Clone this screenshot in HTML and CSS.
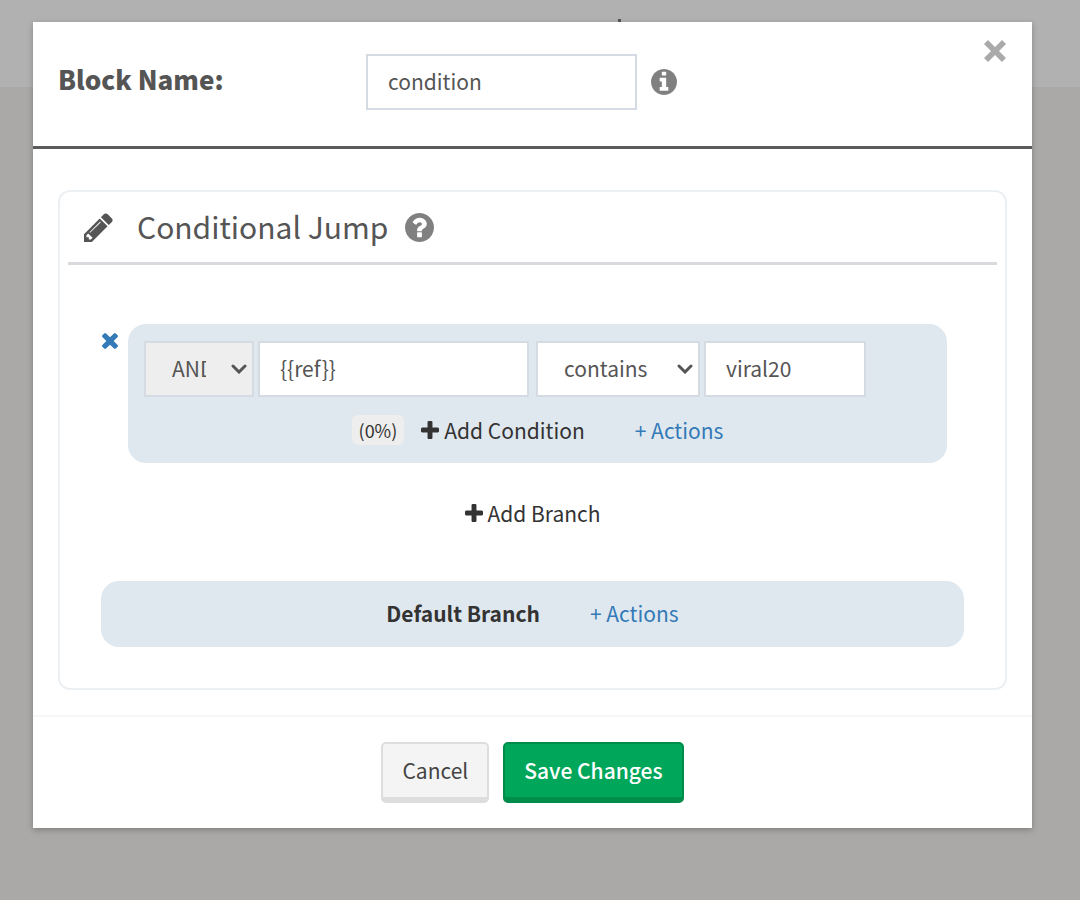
FILE: index.html
```
<!DOCTYPE html>
<html lang="en">
<head>
    <meta charset="UTF-8">
    <meta name="viewport" content="width=device-width, initial-scale=1.0">
    <title>Conditional Jump</title>
    <link rel="stylesheet" href="styles.css">
</head>
<body>
    <div class="topbar"><span class="topbar-mark"></span></div>

    <div class="overlay">
      <div class="modal" role="dialog" aria-label="Edit block">
        <div class="modal-header">
          <div class="block-name">
            <label for="block-name">Block Name:</label>
            <input type="text" id="block-name" class="field" value="condition">
            <svg class="icon info" viewBox="128 128 1536 1536"><path d="M1152 1376v-160q0-14-9-23t-23-9h-96v-512q0-14-9-23t-23-9h-320q-14 0-23 9t-9 23v160q0 14 9 23t23 9h96v320h-96q-14 0-23 9t-9 23v160q0 14 9 23t23 9h448q14 0 23-9t9-23zm-128-896v-160q0-14-9-23t-23-9h-192q-14 0-23 9t-9 23v160q0 14 9 23t23 9h192q14 0 23-9t9-23zm640 416q0 209-103 385.5t-279.5 279.5-385.5 103-385.5-103-279.5-279.5-103-385.5 103-385.5 279.5-279.5 385.5-103 385.5 103 279.5 279.5 103 385.5z"/></svg>
          </div>
          <button type="button" class="close" aria-label="Close">
            <svg class="icon" viewBox="0 0 22 22"><path d="M4 0L11 7L18 0L22 4L15 11L22 18L18 22L11 15L4 22L0 18L7 11L0 4Z"/></svg>
          </button>
        </div>

        <div class="modal-body">
          <div class="panel">
            <div class="panel-title">
              <svg class="icon pencil" viewBox="128 128 1536 1536"><path d="M491 1536l91-91-235-235-91 91v107h128v128h107zm523-928q0-22-22-22-10 0-17 7l-542 542q-7 7-7 17 0 22 22 22 10 0 17-7l542-542q7-7 7-17zm-54-192l416 416-832 832h-416v-416zm683 96q0 53-37 90l-166 166-416-416 166-165q36-38 90-38 53 0 91 38l235 234q37 39 37 91z"/></svg>
              <h3>Conditional Jump</h3>
              <svg class="icon help" viewBox="128 128 1536 1536"><path d="M1024 1376v-192q0-14-9-23t-23-9h-192q-14 0-23 9t-9 23v192q0 14 9 23t23 9h192q14 0 23-9t9-23zm256-672q0-88-55.5-163t-138.5-116-170-41q-243 0-371 213-15 24 8 42l132 100q7 6 19 6 16 0 25-12 53-68 86-92 34-24 86-24 48 0 85.5 26t37.5 59q0 38-20 61t-68 45q-63 28-115.5 86.5t-52.5 125.5v36q0 14 9 23t23 9h192q14 0 23-9t9-23q0-19 21.5-49.5t54.5-49.5q32-18 49-28.5t46-35 44.5-48 28-60.5 12.5-81zm384 192q0 209-103 385.5t-279.5 279.5-385.5 103-385.5-103-279.5-279.5-103-385.5 103-385.5 279.5-279.5 385.5-103 385.5 103 279.5 279.5 103 385.5z"/></svg>
            </div>

            <div class="branch-row">
              <button type="button" class="remove" aria-label="Remove branch">
                <svg class="icon" viewBox="302 366 1188 1188"><path d="M1490 1322q0 40-28 68l-136 136q-28 28-68 28t-68-28l-294-294-294 294q-28 28-68 28t-68-28l-136-136q-28-28-28-68t28-68l294-294-294-294q-28-28-28-68t28-68l136-136q28-28 68-28t68 28l294 294 294-294q28-28 68-28t68 28l136 136q28 28 28 68t-28 68l-294 294 294 294q28 28 28 68z"/></svg>
              </button>
              <div class="branch">
                <div class="condition">
                  <select class="field operator" aria-label="Operator">
                    <option>AND</option>
                    <option>OR</option>
                  </select>
                  <input type="text" class="field" aria-label="Variable" value="{{ref}}">
                  <select class="field compare" aria-label="Comparison">
                    <option>contains</option>
                    <option>equals</option>
                  </select>
                  <input type="text" class="field value" aria-label="Value" value="viral20">
                </div>
                <div class="branch-actions">
                  <span class="percent">(0%)</span>
                  <button type="button" class="add">
                    <svg class="icon" viewBox="192 128 1408 1408"><path d="M1600 736v192q0 40-28 68t-68 28h-416v416q0 40-28 68t-68 28h-192q-40 0-68-28t-28-68v-416h-416q-40 0-68-28t-28-68v-192q0-40 28-68t68-28h416v-416q0-40 28-68t68-28h192q40 0 68 28t28 68v416h416q40 0 68 28t28 68z"/></svg>
                    Add Condition
                  </button>
                  <a href="#" class="actions">+ Actions</a>
                </div>
              </div>
            </div>

            <button type="button" class="add add-branch">
              <svg class="icon" viewBox="192 128 1408 1408"><path d="M1600 736v192q0 40-28 68t-68 28h-416v416q0 40-28 68t-68 28h-192q-40 0-68-28t-28-68v-416h-416q-40 0-68-28t-28-68v-192q0-40 28-68t68-28h416v-416q0-40 28-68t68-28h192q40 0 68 28t28 68v416h416q40 0 68 28t28 68z"/></svg>
              Add Branch
            </button>

            <div class="default-branch">
              <strong>Default Branch</strong>
              <a href="#" class="actions">+ Actions</a>
            </div>
          </div>
        </div>

        <div class="modal-footer">
          <button type="button" class="btn">Cancel</button>
          <button type="button" class="btn save">Save Changes</button>
        </div>
      </div>
    </div>
</body>
</html>
```

FILE: styles.css
```
*{
    margin: 0;
    padding: 0;
    box-sizing: border-box;
}
body{
    min-height: 100vh;
    background: #aaa9a7;
    color: #333;
    font-family: "Noto Sans CJK SC", "Open Sans", sans-serif;
    font-size: 21px;
    line-height: 30px;
}
button, input, select{
    font: inherit;
    color: inherit;
}
button{
    border: none;
    background: none;
    cursor: pointer;
}
a{
    color: #337ab7;
    text-decoration: none;
}
.icon{
    display: block;
    flex: none;
    fill: currentColor;
}

/* page behind the dialog */
.topbar{
    display: flex;
    justify-content: center;
    height: 87px;
    padding: 19px 0 0 159px;
    background: #b1b1b1;
}
.topbar-mark{
    width: 3px;
    height: 16px;
    background: #555;
}
.overlay{
    position: absolute;
    inset: 0;
    padding: 22px 48px 22px 33px;
}
.modal{
    background: #fff;
    box-shadow: 0 2px 6px rgba(0, 0, 0, 0.25);
}

/* header */
.modal-header{
    display: flex;
    justify-content: space-between;
    align-items: flex-start;
    padding: 18px 26px 36px 25px;
    border-bottom: 3px solid #5a5c5b;
}
.block-name{
    display: flex;
    align-items: center;
    padding-top: 14px;
}
.block-name label{
    width: 308px;
    padding-bottom: 6px;
    color: #555;
    font-size: 26px;
    font-weight: 900;
}
.field{
    width: 271px;
    height: 56px;
    padding: 0 20px 2px;
    border: 2px solid #d5dbe3;
    background: #fff;
    color: #555;
    outline: none;
}
.info{
    width: 26px;
    height: 26px;
    margin-left: 14px;
    color: #808080;
}
.close{
    color: #aaa;
}
.close .icon{
    width: 22px;
    height: 22px;
}

/* panel */
.modal-body{
    padding: 41px 25px 25px;
}
.panel{
    display: flex;
    flex-direction: column;
    padding: 0 8px 41px;
    border: 2px solid #edf0f3;
    border-radius: 12px;
}
.panel-title{
    display: flex;
    align-items: center;
    padding: 12px 16px;
    border-bottom: 3px solid #d8dadd;
    color: #555;
}
.panel-title h3{
    margin: 0 17px 0 24px;
    padding-bottom: 2px;
    font-size: 30px;
    font-weight: normal;
    line-height: 44px;
}
.pencil, .help{
    width: 29px;
    height: 29px;
}
.help{
    color: #808080;
}
.branch-row{
    display: flex;
    align-items: flex-start;
    gap: 10px;
    margin: 59px 50px 0 34px;
}
.remove{
    padding-top: 9px;
    color: #337ab7;
}
.remove .icon{
    width: 16px;
    height: 16px;
}
.branch{
    flex: 1;
    padding: 17px 16px 18px;
    border-radius: 18px;
    background: #e0e8ef;
}
.condition{
    display: flex;
    gap: 4px;
}
select.field{
    appearance: none;
    padding: 0 46px 2px 26px;
    background: #fff url("data:image/svg+xml,%3Csvg xmlns='http://www.w3.org/2000/svg' viewBox='0 0 16 10'%3E%3Cpath d='M2 2l6 6 6-6' fill='none' stroke='%23555' stroke-width='3' stroke-linecap='round'/%3E%3C/svg%3E") no-repeat right 5px center / 16px 10px;
}
select.operator{
    width: 110px;
    background-color: #eee;
}
select.compare{
    width: 164px;
    margin-left: 3px;
}
.value{
    width: 162px;
}
.branch-actions{
    display: flex;
    justify-content: center;
    align-items: center;
    margin-top: 18px;
}
.percent{
    padding: 0 7px;
    border-radius: 6px;
    background: #eee;
    font-size: 18px;
}
.add{
    display: flex;
    align-items: center;
    gap: 5px;
    margin-left: 17px;
}
.add .icon{
    width: 18px;
    height: 18px;
}
.actions{
    margin-left: 50px;
}
.add-branch{
    align-self: center;
    margin: 35px 0 53px;
}
.default-branch{
    display: flex;
    justify-content: center;
    margin: 0 33px;
    padding: 17px 18px 19px;
    border-radius: 18px;
    background: #e0e8ef;
}

/* footer */
.modal-footer{
    display: flex;
    justify-content: center;
    gap: 14px;
    padding: 25px;
    border-top: 2px solid #f6f6f6;
}
.btn{
    padding: 11px 19px 12px;
    border: 2px solid #ddd;
    border-bottom-width: 6px;
    border-radius: 5px;
    background: #f4f4f4;
    color: #444;
}
.save{
    border-color: #008d4c;
    background: #00a65a;
    color: #fff;
    font-weight: 500;
}
```
